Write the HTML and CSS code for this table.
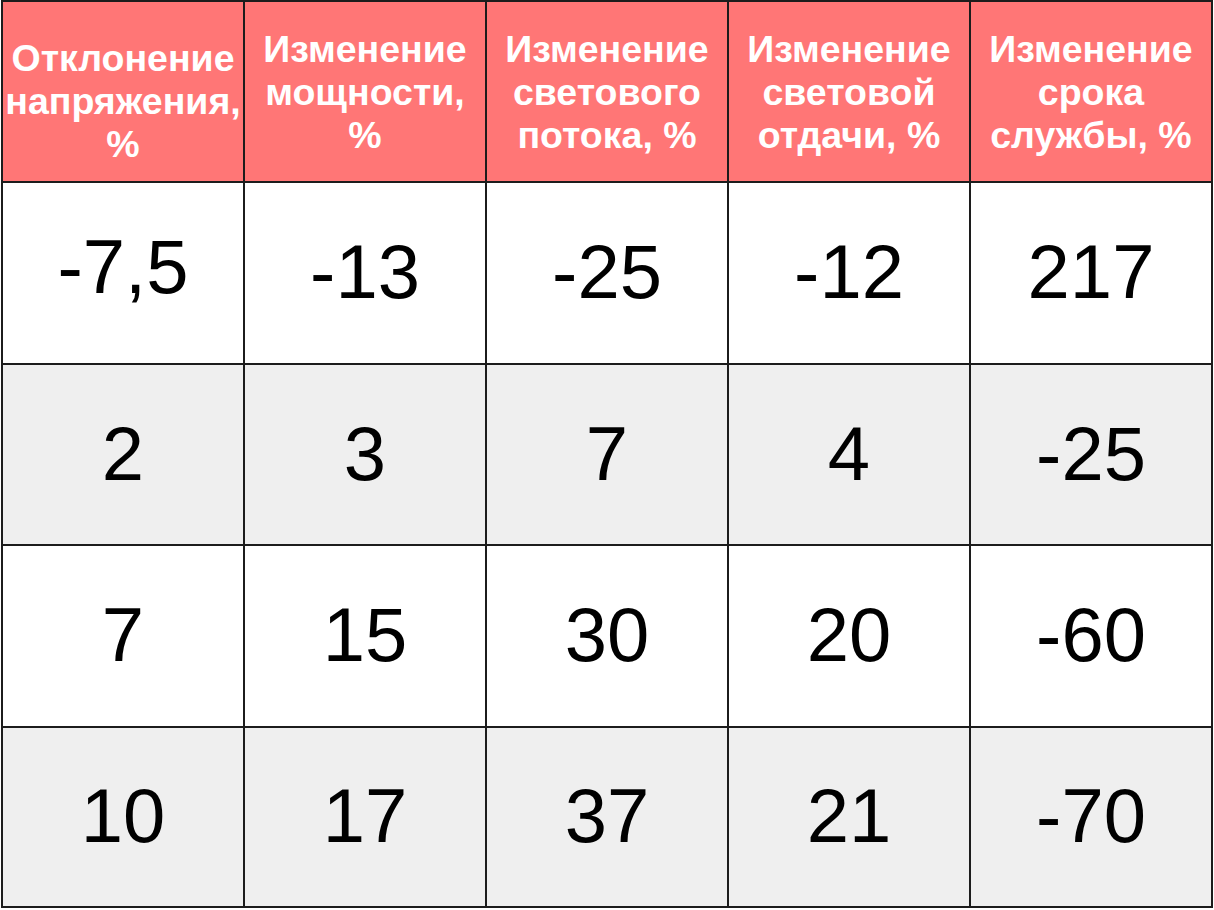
FILE: index.html
```html
<!DOCTYPE html>
<html lang="ru">
<head>
<meta charset="utf-8">
<title>Таблица</title>
<link rel="stylesheet" href="styles.css">
</head>
<body>
<div class="table">
  <div class="cell head first">Отклонение<br>напряжения,<br>%</div>
  <div class="cell head">Изменение<br>мощности,<br>%</div>
  <div class="cell head">Изменение<br>светового<br>потока, %</div>
  <div class="cell head">Изменение<br>световой<br>отдачи, %</div>
  <div class="cell head">Изменение<br>срока<br>службы, %</div>

  <div class="cell num up">-7,5</div>
  <div class="cell num">-13</div>
  <div class="cell num">-25</div>
  <div class="cell num">-12</div>
  <div class="cell num">217</div>

  <div class="cell num alt">2</div>
  <div class="cell num alt">3</div>
  <div class="cell num alt">7</div>
  <div class="cell num alt">4</div>
  <div class="cell num alt">-25</div>

  <div class="cell num">7</div>
  <div class="cell num">15</div>
  <div class="cell num">30</div>
  <div class="cell num">20</div>
  <div class="cell num">-60</div>

  <div class="cell num alt">10</div>
  <div class="cell num alt">17</div>
  <div class="cell num alt">37</div>
  <div class="cell num alt">21</div>
  <div class="cell num alt">-70</div>
</div>
</body>
</html>
```
FILE: styles.css
```css
html, body {
  margin: 0;
  padding: 0;
  background: #ffffff;
}
body {
  font-family: "Liberation Sans", Arial, sans-serif;
}
.table {
  margin-left: 1px;
  width: 1212px;
  box-sizing: border-box;
  display: grid;
  grid-template-columns: repeat(5, 240px);
  grid-template-rows: 179px 180px 179px 180px 178px;
  gap: 2px;
  padding: 2px;
  background: #1c1c1c;
}
.cell {
  display: flex;
  align-items: center;
  justify-content: center;
  text-align: center;
  background: #ffffff;
  color: #000000;
  overflow: visible;
  white-space: nowrap;
}
.head {
  background: #ff7676;
  color: #ffffff;
  font-weight: bold;
  font-size: 37.5px;
  line-height: 43px;
  padding: 2px 0 0;
}
.head.first {
  padding: 20px 0 0;
}
.num {
  font-size: 76px;
  line-height: 1;
  padding-bottom: 2px;
}
.num.up {
  padding-bottom: 12px;
}
.alt {
  background: #efefef;
}
```
